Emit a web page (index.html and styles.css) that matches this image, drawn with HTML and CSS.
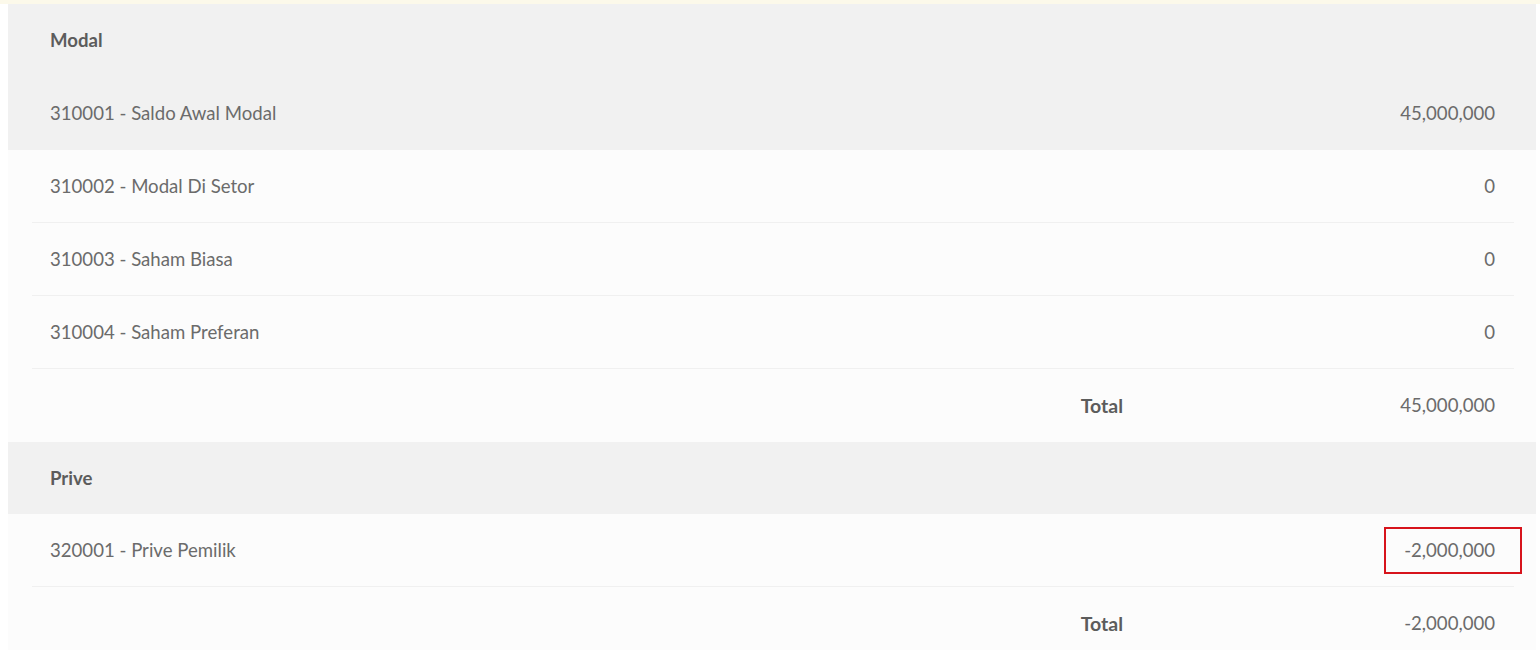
FILE: index.html
```html
<!DOCTYPE html>
<html lang="id">
<head>
<meta charset="utf-8">
<title>Modal</title>
<link rel="stylesheet" href="styles.css">
</head>
<body>
<div class="strip"></div>
<div class="sheet">
  <div class="group-head">Modal</div>
  <div class="row row-shaded"><div class="inner no-line"><span class="name">310001 - Saldo Awal Modal</span><span class="amount">45,000,000</span></div></div>
  <div class="row"><div class="inner"><span class="name">310002 - Modal Di Setor</span><span class="amount">0</span></div></div>
  <div class="row"><div class="inner"><span class="name">310003 - Saham Biasa</span><span class="amount">0</span></div></div>
  <div class="row"><div class="inner"><span class="name">310004 - Saham Preferan</span><span class="amount">0</span></div></div>
  <div class="row"><div class="inner no-line"><span class="name"></span><span class="label">Total</span><span class="amount">45,000,000</span></div></div>
  <div class="group-head">Prive</div>
  <div class="row"><div class="inner"><span class="name">320001 - Prive Pemilik</span><span class="amount"><span class="marked">-2,000,000</span></span></div></div>
  <div class="row"><div class="inner no-line"><span class="name"></span><span class="label">Total</span><span class="amount">-2,000,000</span></div></div>
</div>
</body>
</html>
```

FILE: styles.css
```css
html, body {
  margin: 0;
  padding: 0;
  background: #ffffff;
}
body {
  font-family: "Lato", "Liberation Sans", sans-serif;
  font-size: 18.6px;
  color: #6b6b6b;
  overflow: hidden;
}
.strip {
  height: 4px;
  background: #fcf9ea;
}
.sheet {
  margin-left: 8px;
  width: 1528px;
  background: #fcfcfc;
}
.group-head {
  height: 72px;
  display: flex;
  align-items: center;
  padding-left: 42px;
  background: #f1f1f1;
  font-weight: 700;
  color: #5c5c5c;
}
.row-shaded {
  background: #f1f1f1;
}
.inner {
  margin: 0 22px 0 24px;
  padding: 0 19px 0 18px;
  height: 73px;
  box-sizing: border-box;
  display: flex;
  align-items: center;
  border-bottom: 1px solid #f0f0f0;
}
.row-shaded .inner {
  height: 74px;
}
.inner.no-line {
  border-bottom-color: transparent;
}
.name {
  flex: 1;
}
.label {
  font-weight: 700;
  font-size: 19.5px;
  color: #5c5c5c;
}
.amount {
  width: 372px;
  text-align: right;
}
.marked {
  display: inline-block;
  border: 2px solid #d7141c;
  padding: 10px 25px 10px 18px;
  margin-right: -27px;
  line-height: 23px;
}
```
